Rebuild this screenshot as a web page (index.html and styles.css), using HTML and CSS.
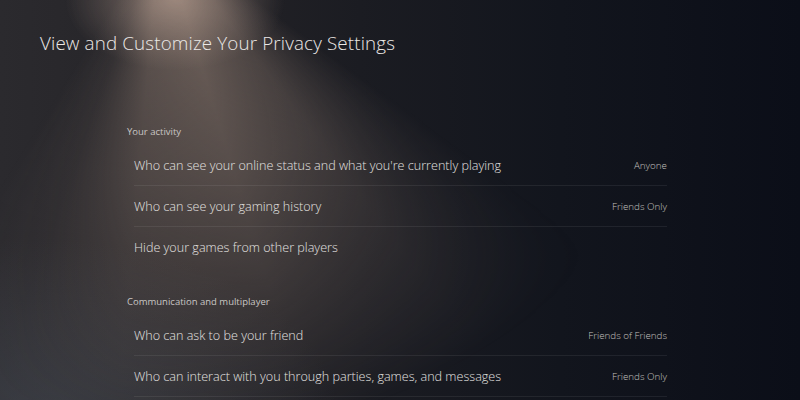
FILE: index.html
```html
<!DOCTYPE html>
<html lang="en">
<head>
  <meta charset="UTF-8">
  <meta name="viewport" content="width=device-width, initial-scale=1.0">
  <title>Privacy Settings</title>
  <link rel="stylesheet" href="styles.css">
</head>
<body>
  <div class="screen">
    <h1 class="title">View and Customize Your Privacy Settings</h1>

    <div class="settings">
      <div class="section">
        <h2 class="section-label">Your activity</h2>
        <div class="row">
          <span class="row-name">Who can see your online status and what you're currently playing</span>
          <span class="row-value">Anyone</span>
        </div>
        <div class="row">
          <span class="row-name">Who can see your gaming history</span>
          <span class="row-value">Friends Only</span>
        </div>
        <div class="row no-line">
          <span class="row-name">Hide your games from other players</span>
          <span class="row-value"></span>
        </div>
      </div>

      <div class="section">
        <h2 class="section-label">Communication and multiplayer</h2>
        <div class="row">
          <span class="row-name">Who can ask to be your friend</span>
          <span class="row-value">Friends of Friends</span>
        </div>
        <div class="row">
          <span class="row-name">Who can interact with you through parties, games, and messages</span>
          <span class="row-value">Friends Only</span>
        </div>
      </div>
    </div>
  </div>
</body>
</html>
```

FILE: styles.css
```css
html, body {
  margin: 0;
  padding: 0;
  height: 100%;
}
body {
  font-family: "Open Sans", "Liberation Sans", sans-serif;
  font-weight: 300;
  color: #e6e4e2;
  background-color: #10131b;
  overflow: hidden;
}
.screen {
  position: relative;
  isolation: isolate;
  width: 800px;
  height: 400px;
  box-sizing: border-box;
  padding: 30px 0 0 40px;
  background:
    radial-gradient(ellipse 300px 180px at 40px 420px, rgba(72, 78, 88, 0.5), rgba(72, 78, 88, 0) 100%),
    linear-gradient(90deg, #2b2a2e 0%, #242327 25%, #1b1c22 45%, #12151d 70%, #0b0e18 100%);
}
/* spotlight beam from the top left */
.screen::before {
  content: "";
  position: absolute;
  inset: 0;
  z-index: -1;
  pointer-events: none;
  background:
    radial-gradient(ellipse 110px 70px at 175px 0px, rgba(185, 160, 146, 0.7), rgba(185, 160, 146, 0) 100%),
    conic-gradient(from 0deg at 160px -70px,
      rgba(150, 130, 118, 0) 0deg,
      rgba(150, 130, 118, 0) 126deg,
      rgba(150, 130, 118, 0.45) 143deg,
      rgba(150, 130, 118, 0.70) 163deg,
      rgba(150, 130, 118, 0.55) 185deg,
      rgba(150, 130, 118, 0.15) 200deg,
      rgba(150, 130, 118, 0) 212deg,
      rgba(150, 130, 118, 0) 360deg);
  -webkit-mask-image: radial-gradient(ellipse 560px 480px at 160px -40px, #000 0%, rgba(0, 0, 0, 0.65) 45%, transparent 100%);
  mask-image: radial-gradient(ellipse 560px 480px at 160px -40px, #000 0%, rgba(0, 0, 0, 0.65) 45%, transparent 100%);
}
.title {
  margin: 0;
  font-size: 18.8px;
  font-weight: 300;
  line-height: 26px;
  letter-spacing: 0.15px;
  color: #ebe8e6;
}
.settings {
  margin: 69px 0 0 87px;
  width: 540px;
}
.section {
  margin-bottom: 27px;
}
.section-label {
  margin: 0 0 6px 0;
  font-size: 9.5px;
  font-weight: 400;
  line-height: 14px;
  color: #c9c6c4;
}
.row {
  display: flex;
  justify-content: space-between;
  align-items: center;
  height: 40px;
  margin-left: 7px;
  border-bottom: 1px solid rgba(255, 255, 255, 0.07);
}
.row.no-line {
  border-bottom-color: transparent;
}
.row-name {
  font-size: 12.6px;
  color: #e4e2e0;
}
.row-value {
  font-size: 9.8px;
  font-weight: 300;
  color: #c2c0bf;
}
```
